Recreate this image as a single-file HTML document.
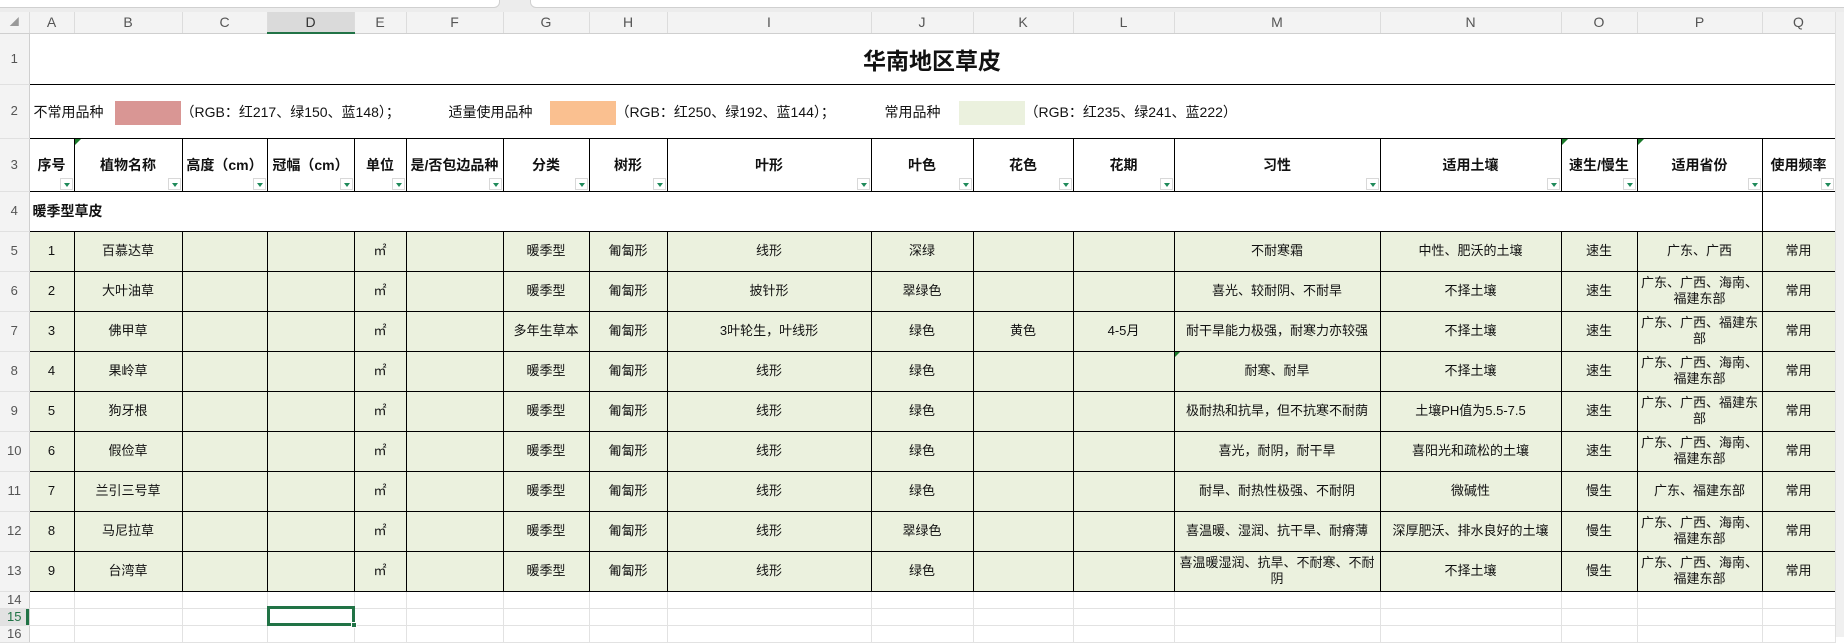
<!DOCTYPE html>
<html><head><meta charset="utf-8">
<style>
*{margin:0;padding:0;box-sizing:border-box}
body{width:1844px;height:637px;overflow:hidden;background:#fff;position:relative;font-family:"Liberation Sans","Noto Sans CJK SC",sans-serif}
.top{position:absolute;left:0;top:0;width:1844px;height:12px;background:#ececec}
.top div{position:absolute;top:-6px;height:14px;background:#fff;border:1px solid #d0d0d0;border-radius:6px}
table{position:absolute;left:0;top:12px;border-collapse:collapse;table-layout:fixed}
td{padding:0;text-align:center;vertical-align:middle;font-size:13px;color:#111;overflow:hidden;position:relative;line-height:16px}
.ch td{background:#f3f3f3;color:#555;font-size:14px;border-right:1px solid #dcdcdc;border-bottom:1px solid #cfcfcf;height:21px}
.ch td.sel{background:#dadada;border-bottom:2px solid #217346;color:#333}
td.rn{background:#f3f3f3;color:#555;font-size:13px;border-right:1px solid #cfcfcf;border-bottom:1px solid #e0e0e0}
td.rns{color:#217346;background:#e2e2e2;box-shadow:inset -3px 0 0 #217346}
.b td.c{border:1px solid #000}
.g td.c{background:#ebf1de}
.h td.c{font-weight:bold;font-size:14px}
.e td.c{border-right:1px solid #e2e2e2;border-bottom:1px solid #e2e2e2}
.f{position:absolute;right:1px;bottom:1px;width:13px;height:12px;background:#fff;border:1px solid #d8d8d8}
.f:after{content:"";position:absolute;left:3px;top:4px;border-left:3px solid transparent;border-right:3px solid transparent;border-top:4px solid #1f8a5a}
.tri{position:absolute;left:0;top:0;border-top:6px solid #1a7a2a;border-right:6px solid transparent}
.sw{display:inline-block;width:66px;height:24px;vertical-align:middle}
.l2{position:absolute;top:0;height:54px;line-height:54px;font-size:14px;white-space:nowrap}
</style></head><body>
<div class="top"><div style="left:-10px;width:510px"></div><div style="left:530px;width:1320px"></div></div>
<table>
<colgroup><col style="width:29px"><col style="width:45px"><col style="width:108px"><col style="width:85px"><col style="width:87px"><col style="width:52px"><col style="width:97px"><col style="width:86px"><col style="width:78px"><col style="width:204px"><col style="width:102px"><col style="width:100px"><col style="width:101px"><col style="width:206px"><col style="width:181px"><col style="width:76px"><col style="width:125px"><col style="width:73px"><col style="width:9px"></colgroup>
<tr class="ch"><td style="font-size:9px;color:#999">◢</td><td>A</td><td>B</td><td>C</td><td class="sel">D</td><td>E</td><td>F</td><td>G</td><td>H</td><td>I</td><td>J</td><td>K</td><td>L</td><td>M</td><td>N</td><td>O</td><td>P</td><td>Q</td><td style="background:#eee;border:none"></td></tr>
<tr style="height:51px"><td class="rn">1</td><td colspan="17" style="font-weight:bold;font-size:23px;padding-top:4px">华南地区草皮</td><td style="border-left:1px solid #e2e2e2"></td></tr>
<tr class="b" style="height:54px"><td class="rn">2</td><td class="c" colspan="17" style="text-align:left">
<span class="l2" style="left:4px">不常用品种</span><span class="l2" style="left:85px"><span class="sw" style="background:rgb(217,150,148)"></span>（RGB：红217、绿150、蓝148）；</span>
<span class="l2" style="left:419px">适量使用品种</span><span class="l2" style="left:520px"><span class="sw" style="background:rgb(250,192,144)"></span>（RGB：红250、绿192、蓝144）；</span>
<span class="l2" style="left:855px">常用品种</span><span class="l2" style="left:929px"><span class="sw" style="background:rgb(235,241,222)"></span>（RGB：红235、绿241、蓝222）</span>
</td><td></td></tr>
<tr class="b h" style="height:53px"><td class="rn">3</td>
<td class="c">序号<i class="f"></i></td><td class="c"><i class="tri"></i>植物名称<i class="f"></i></td><td class="c">高度（cm）<i class="f"></i></td><td class="c">冠幅（cm）<i class="f"></i></td><td class="c">单位<i class="f"></i></td><td class="c">是/否包边品种<i class="f"></i></td><td class="c">分类<i class="f"></i></td><td class="c">树形<i class="f"></i></td><td class="c">叶形<i class="f"></i></td><td class="c">叶色<i class="f"></i></td><td class="c">花色<i class="f"></i></td><td class="c">花期<i class="f"></i></td><td class="c">习性<i class="f"></i></td><td class="c">适用土壤<i class="f"></i></td><td class="c"><i class="tri"></i>速生/慢生<i class="f"></i></td><td class="c"><i class="tri"></i>适用省份<i class="f"></i></td><td class="c">使用频率<i class="f"></i></td><td></td></tr>
<tr class="b h" style="height:40px"><td class="rn">4</td><td class="c" colspan="16" style="text-align:left;padding-left:3px">暖季型草皮</td><td class="c"></td><td></td></tr>
<tr class="b g" style="height:40px"><td class="rn">5</td><td class="c">1</td><td class="c">百慕达草</td><td class="c"></td><td class="c"></td><td class="c">㎡</td><td class="c"></td><td class="c">暖季型</td><td class="c">匍匐形</td><td class="c">线形</td><td class="c">深绿</td><td class="c"></td><td class="c"></td><td class="c">不耐寒霜</td><td class="c">中性、肥沃的土壤</td><td class="c">速生</td><td class="c">广东、广西</td><td class="c">常用</td><td></td></tr>
<tr class="b g" style="height:40px"><td class="rn">6</td><td class="c">2</td><td class="c">大叶油草</td><td class="c"></td><td class="c"></td><td class="c">㎡</td><td class="c"></td><td class="c">暖季型</td><td class="c">匍匐形</td><td class="c">披针形</td><td class="c">翠绿色</td><td class="c"></td><td class="c"></td><td class="c">喜光、较耐阴、不耐旱</td><td class="c">不择土壤</td><td class="c">速生</td><td class="c">广东、广西、海南、福建东部</td><td class="c">常用</td><td></td></tr>
<tr class="b g" style="height:40px"><td class="rn">7</td><td class="c">3</td><td class="c">佛甲草</td><td class="c"></td><td class="c"></td><td class="c">㎡</td><td class="c"></td><td class="c">多年生草本</td><td class="c">匍匐形</td><td class="c">3叶轮生，叶线形</td><td class="c">绿色</td><td class="c">黄色</td><td class="c">4-5月</td><td class="c">耐干旱能力极强，耐寒力亦较强</td><td class="c">不择土壤</td><td class="c">速生</td><td class="c">广东、广西、福建东部</td><td class="c">常用</td><td></td></tr>
<tr class="b g" style="height:40px"><td class="rn">8</td><td class="c">4</td><td class="c">果岭草</td><td class="c"></td><td class="c"></td><td class="c">㎡</td><td class="c"></td><td class="c">暖季型</td><td class="c">匍匐形</td><td class="c">线形</td><td class="c">绿色</td><td class="c"></td><td class="c"></td><td class="c"><i class="tri" style="border-top-width:5px;border-right-width:5px"></i>耐寒、耐旱</td><td class="c">不择土壤</td><td class="c">速生</td><td class="c">广东、广西、海南、福建东部</td><td class="c">常用</td><td></td></tr>
<tr class="b g" style="height:40px"><td class="rn">9</td><td class="c">5</td><td class="c">狗牙根</td><td class="c"></td><td class="c"></td><td class="c">㎡</td><td class="c"></td><td class="c">暖季型</td><td class="c">匍匐形</td><td class="c">线形</td><td class="c">绿色</td><td class="c"></td><td class="c"></td><td class="c">极耐热和抗旱，但不抗寒不耐荫</td><td class="c">土壤PH值为5.5-7.5</td><td class="c">速生</td><td class="c">广东、广西、福建东部</td><td class="c">常用</td><td></td></tr>
<tr class="b g" style="height:40px"><td class="rn">10</td><td class="c">6</td><td class="c">假俭草</td><td class="c"></td><td class="c"></td><td class="c">㎡</td><td class="c"></td><td class="c">暖季型</td><td class="c">匍匐形</td><td class="c">线形</td><td class="c">绿色</td><td class="c"></td><td class="c"></td><td class="c">喜光，耐阴，耐干旱</td><td class="c">喜阳光和疏松的土壤</td><td class="c">速生</td><td class="c">广东、广西、海南、福建东部</td><td class="c">常用</td><td></td></tr>
<tr class="b g" style="height:40px"><td class="rn">11</td><td class="c">7</td><td class="c">兰引三号草</td><td class="c"></td><td class="c"></td><td class="c">㎡</td><td class="c"></td><td class="c">暖季型</td><td class="c">匍匐形</td><td class="c">线形</td><td class="c">绿色</td><td class="c"></td><td class="c"></td><td class="c">耐旱、耐热性极强、不耐阴</td><td class="c">微碱性</td><td class="c">慢生</td><td class="c">广东、福建东部</td><td class="c">常用</td><td></td></tr>
<tr class="b g" style="height:40px"><td class="rn">12</td><td class="c">8</td><td class="c">马尼拉草</td><td class="c"></td><td class="c"></td><td class="c">㎡</td><td class="c"></td><td class="c">暖季型</td><td class="c">匍匐形</td><td class="c">线形</td><td class="c">翠绿色</td><td class="c"></td><td class="c"></td><td class="c">喜温暖、湿润、抗干旱、耐瘠薄</td><td class="c">深厚肥沃、排水良好的土壤</td><td class="c">慢生</td><td class="c">广东、广西、海南、福建东部</td><td class="c">常用</td><td></td></tr>
<tr class="b g" style="height:40px"><td class="rn">13</td><td class="c">9</td><td class="c">台湾草</td><td class="c"></td><td class="c"></td><td class="c">㎡</td><td class="c"></td><td class="c">暖季型</td><td class="c">匍匐形</td><td class="c">线形</td><td class="c">绿色</td><td class="c"></td><td class="c"></td><td class="c">喜温暖湿润、抗旱、不耐寒、不耐阴</td><td class="c">不择土壤</td><td class="c">慢生</td><td class="c">广东、广西、海南、福建东部</td><td class="c">常用</td><td></td></tr>
<tr class="e" style="height:16px"><td class="rn">14</td><td class="c"></td><td class="c"></td><td class="c"></td><td class="c"></td><td class="c"></td><td class="c"></td><td class="c"></td><td class="c"></td><td class="c"></td><td class="c"></td><td class="c"></td><td class="c"></td><td class="c"></td><td class="c"></td><td class="c"></td><td class="c"></td><td class="c"></td><td></td></tr>
<tr class="e" style="height:16px"><td class="rn rns">15</td><td class="c"></td><td class="c"></td><td class="c"></td><td class="c"></td><td class="c"></td><td class="c"></td><td class="c"></td><td class="c"></td><td class="c"></td><td class="c"></td><td class="c"></td><td class="c"></td><td class="c"></td><td class="c"></td><td class="c"></td><td class="c"></td><td class="c"></td><td></td></tr>
<tr class="e" style="height:14px"><td class="rn">16</td><td class="c"></td><td class="c"></td><td class="c"></td><td class="c"></td><td class="c"></td><td class="c"></td><td class="c"></td><td class="c"></td><td class="c"></td><td class="c"></td><td class="c"></td><td class="c"></td><td class="c"></td><td class="c"></td><td class="c"></td><td class="c"></td><td class="c"></td><td></td></tr>
</table>
<div style="position:absolute;left:267px;top:606px;width:88px;height:20px;border:3px solid #217346"></div>
<div style="position:absolute;left:351px;top:622px;width:6px;height:6px;background:#217346;border:1px solid #fff"></div>
<div style="position:absolute;left:1835px;top:12px;width:9px;height:625px;background:#f0f0f0;border-left:1px solid #e0e0e0"></div>
</body></html>
